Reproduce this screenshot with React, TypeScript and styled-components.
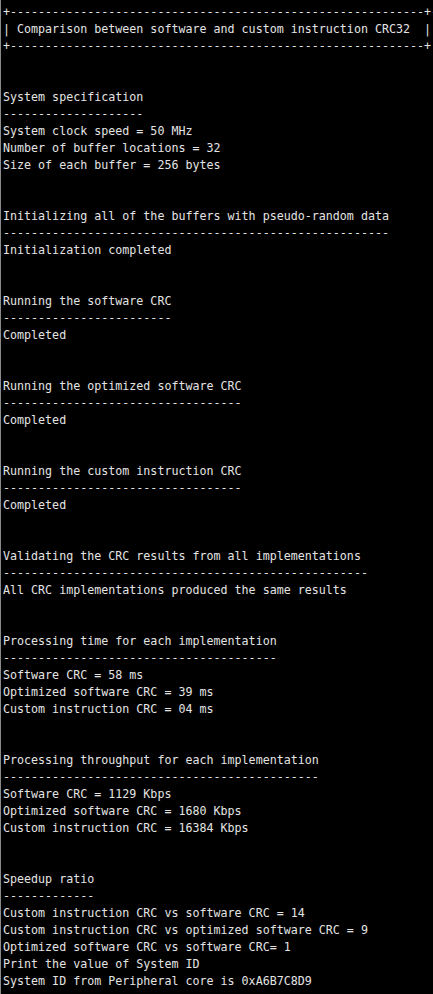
import React from "react";
import styled, { createGlobalStyle } from "styled-components";

const Global = createGlobalStyle`
  html, body { margin: 0; padding: 0; background: #000; }
  body { overflow: hidden; }
`;

const Terminal = styled.div`
  width: 433px;
  height: 994px;
  box-sizing: border-box;
  background: #000;
  color: #e4e4e4;
  font-family: "DejaVu Sans Mono", "Liberation Mono", monospace;
  font-size: 11.66px;
  line-height: 17px;
  padding: 4px 0 0 2px;
  border-left: 1px solid #8a8a8a;
  overflow: hidden;
  display: flex;
  flex-direction: column;
`;

const Line = styled.div`
  white-space: pre;
  height: 17px;
  overflow: hidden;
`;

const dash = (n: number) => "-".repeat(n);

const heading = (t: string, n?: number) => [t, dash(n ?? t.length)];

const lines: string[] = [
  "+" + dash(59) + "+-",
  "| Comparison between software and custom instruction CRC32  |",
  "+" + dash(59) + "+",
  "",
  "",
  ...heading("System specification"),
  "System clock speed = 50 MHz",
  "Number of buffer locations = 32",
  "Size of each buffer = 256 bytes",
  "",
  "",
  ...heading("Initializing all of the buffers with pseudo-random data"),
  "Initialization completed",
  "",
  "",
  ...heading("Running the software CRC"),
  "Completed",
  "",
  "",
  ...heading("Running the optimized software CRC"),
  "Completed",
  "",
  "",
  ...heading("Running the custom instruction CRC"),
  "Completed",
  "",
  "",
  ...heading("Validating the CRC results from all implementations", 52),
  "All CRC implementations produced the same results",
  "",
  "",
  ...heading("Processing time for each implementation"),
  "Software CRC = 58 ms",
  "Optimized software CRC = 39 ms",
  "Custom instruction CRC = 04 ms",
  "",
  "",
  ...heading("Processing throughput for each implementation"),
  "Software CRC = 1129 Kbps",
  "Optimized software CRC = 1680 Kbps",
  "Custom instruction CRC = 16384 Kbps",
  "",
  "",
  ...heading("Speedup ratio"),
  "Custom instruction CRC vs software CRC = 14",
  "Custom instruction CRC vs optimized software CRC = 9",
  "Optimized software CRC vs software CRC= 1",
  "Print the value of System ID",
  "System ID from Peripheral core is 0xA6B7C8D9",
];

export default function App() {
  return (
    <>
      <Global />
      <Terminal>
        {lines.map((l, i) => (
          <Line key={i}>{l}</Line>
        ))}
      </Terminal>
    </>
  );
}
